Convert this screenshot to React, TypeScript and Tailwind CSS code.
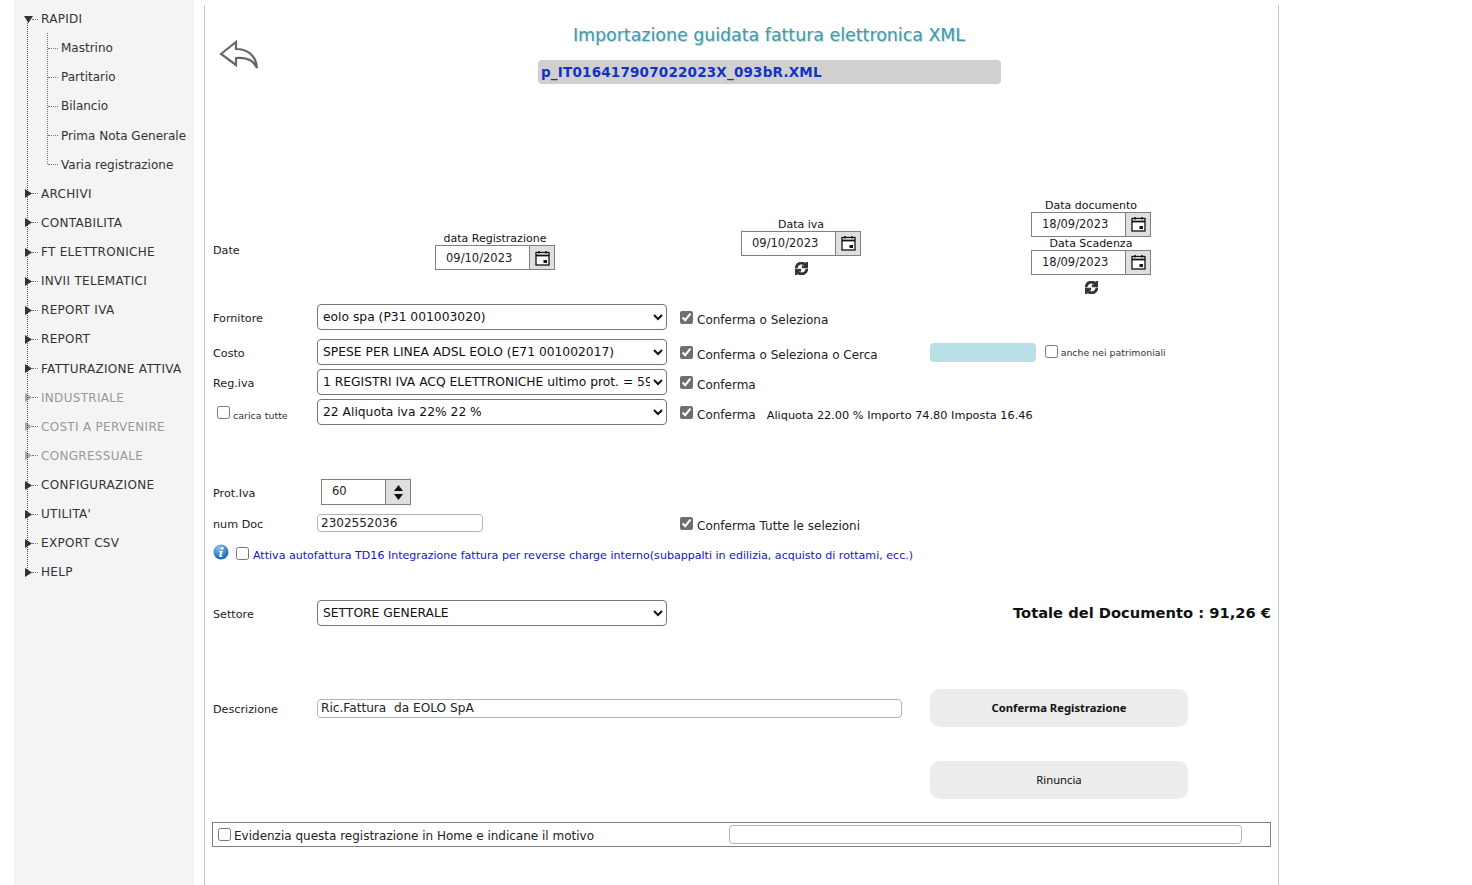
import { FaSync } from "react-icons/fa";

const VERDANA = "font-['DejaVu_Sans',Verdana,sans-serif]";

const menu: { label: string; disabled?: boolean; open?: boolean; children?: string[] }[] = [
  {
    label: "RAPIDI",
    open: true,
    children: ["Mastrino", "Partitario", "Bilancio", "Prima Nota Generale", "Varia registrazione"],
  },
  { label: "ARCHIVI" },
  { label: "CONTABILITA" },
  { label: "FT ELETTRONICHE" },
  { label: "INVII TELEMATICI" },
  { label: "REPORT IVA" },
  { label: "REPORT" },
  { label: "FATTURAZIONE ATTIVA" },
  { label: "INDUSTRIALE", disabled: true },
  { label: "COSTI A PERVENIRE", disabled: true },
  { label: "CONGRESSUALE", disabled: true },
  { label: "CONFIGURAZIONE" },
  { label: "UTILITA'" },
  { label: "EXPORT CSV" },
  { label: "HELP" },
];

function Arrow({ open, disabled }: { open?: boolean; disabled?: boolean }) {
  return (
    <svg
      width="9"
      height="9"
      viewBox="0 0 9 9"
      className={`absolute left-[10px] top-[10px] ${disabled ? "opacity-40" : ""}`}
    >
      {open ? <path d="M0 1h9L4.5 8z" fill="#333" /> : <path d="M1 0l7 4.5L1 9z" fill="#333" />}
    </svg>
  );
}

function Sidebar() {
  return (
    <aside className="relative h-[885px] w-[180px] shrink-0 bg-[#f4f4f4] pt-[4.5px] text-[12px] text-[#333]">
      {/* tree lines */}
      <div className="absolute left-[13px] top-[18px] h-[554px] border-l border-dotted border-[#555]" />
      <div className="absolute left-[33px] top-[33px] h-[131px] border-l border-dotted border-[#777]" />
      {menu.map((item) => (
        <div key={item.label}>
          <div
            className={`relative flex h-[29.14px] items-center pl-[27px] tracking-[0.3px] ${item.disabled ? "text-[#999]" : ""}`}
          >
            <Arrow open={item.open} disabled={item.disabled} />
            <span className="absolute left-[18px] top-[14px] w-[6px] border-t border-dotted border-[#777]" />
            {item.label}
          </div>
          {item.children?.map((child) => (
            <div key={child} className="relative flex h-[29.14px] items-center pl-[47px]">
              <span className="absolute left-[34px] top-[14px] w-[10px] border-t border-dotted border-[#777]" />
              {child}
            </div>
          ))}
        </div>
      ))}
    </aside>
  );
}

function CalendarIcon() {
  return (
    <svg width="15" height="16" viewBox="0 0 15 16" fill="none">
      <rect x="1" y="2.5" width="13" height="12.5" fill="#fff" stroke="#111" strokeWidth="1.3" />
      <path d="M1 5.5h13" stroke="#111" strokeWidth="1.8" />
      <path d="M4 1v2.5M11 1v2.5" stroke="#111" strokeWidth="1.5" />
      <rect x="8.5" y="10" width="3.5" height="3" fill="#111" />
    </svg>
  );
}

function DateField({ label, value }: { label: string; value: string }) {
  return (
    <div className="flex w-[120px] flex-col items-center">
      <div className="h-[13px] whitespace-nowrap text-[11px] leading-[13px] text-[#111]">{label}</div>
      <div className="flex h-[25px] w-[120px] border border-[#808080] bg-white">
        <input
          readOnly
          value={value}
          className="w-[94px] border-r border-[#808080] pl-[10px] pt-[2px] text-[11.5px] text-[#222] outline-none"
        />
        <div className="flex flex-1 items-center justify-center bg-[#dfdfdf]">
          <CalendarIcon />
        </div>
      </div>
    </div>
  );
}

function Refresh() {
  return (
    <FaSync
      className="mx-auto mt-[6px] h-[13px] w-[13px] text-[#333]"
      stroke="currentColor"
      strokeWidth={40}
    />
  );
}

function Check({ checked }: { checked?: boolean }) {
  return (
    <input
      type="checkbox"
      defaultChecked={checked}
      className="h-[13px] w-[13px] shrink-0 accent-[#6f6f6f]"
    />
  );
}

function Confirm({ label }: { label: string }) {
  return (
    <label className="flex items-center gap-[4px] text-[12px] text-[#222]">
      <Check checked />
      <span className="relative top-[2.5px] whitespace-nowrap">{label}</span>
    </label>
  );
}

function Select({ value }: { value: string }) {
  return (
    <select
      defaultValue={value}
      className="h-[26px] w-[350px] rounded-[4px] border border-[#767676] bg-white pl-[1px] text-[12.3px] text-[#111]"
    >
      <option>{value}</option>
    </select>
  );
}

function FieldLabel({ children, width = "w-[112px]" }: { children: React.ReactNode; width?: string }) {
  return (
    <div className={`${width} shrink-0 pl-[8px] text-[11.2px] text-[#222]`}>
      <span className="relative top-[2px]">{children}</span>
    </div>
  );
}

function FormRow({
  label,
  value,
  className = "",
  children,
}: {
  label: React.ReactNode;
  value: string;
  className?: string;
  children?: React.ReactNode;
}) {
  return (
    <div className={`flex h-[26px] items-center ${className}`}>
      {label}
      <Select value={value} />
      <div className="ml-[13px] flex items-center">{children}</div>
    </div>
  );
}

function InfoIcon() {
  return (
    <svg width="16" height="16" viewBox="0 0 16 16" className="relative top-[-1px]">
      <defs>
        <radialGradient id="info" cx="40%" cy="25%" r="80%">
          <stop offset="0" stopColor="#8cc4ee" />
          <stop offset="1" stopColor="#0f5ca8" />
        </radialGradient>
      </defs>
      <circle cx="8" cy="8" r="7.5" fill="url(#info)" />
      <circle cx="9.2" cy="4.3" r="1.4" fill="#fff" />
      <path d="M6.5 7h3.2L8.4 12h1.1v1H6l1.2-5H6.5z" fill="#fff" />
    </svg>
  );
}

function ActionButton({ label, bold }: { label: string; bold?: boolean }) {
  return (
    <button
      className={`h-[38px] w-[258px] rounded-[10px] bg-[#ececec] font-['Noto_Sans',sans-serif] text-[11.25px] text-[#111] ${bold ? "font-bold" : ""}`}
    >
      {label}
    </button>
  );
}

export default function App() {
  return (
    <div className={`flex h-[885px] overflow-hidden bg-white pl-[14px] ${VERDANA}`}>
      <Sidebar />

      <main className="ml-[10px] mt-[5px] h-[880px] w-[1075px] shrink-0 border-x border-[#c8c8c8]">
        {/* Header */}
        <div className="relative h-[195px]">
          <svg
            width="40"
            height="30"
            viewBox="0 0 40 30"
            fill="none"
            className="absolute left-[14px] top-[35px]"
          >
            <path
              d="M2 14L17 2v7c11 0 20 6 21 19-3-7-10-11-21-10v7z"
              stroke="#666"
              strokeWidth="2.2"
              strokeLinejoin="miter"
            />
          </svg>
          <h1 className="pl-[55px] pt-[18px] text-center text-[17.4px] leading-[24px] text-[#35a0b4] [text-shadow:1px_1px_1px_#ccc]">
            Importazione guidata fattura elettronica XML
          </h1>
          <div className="ml-[333px] mt-[13px] flex h-[24px] w-[463px] items-center rounded-[4px] bg-[#d0d0d0] pl-[3px] text-[13.5px] font-bold tracking-[0.2px] text-[#1433c4]">
            p_IT016417907022023X_093bR.XML
          </div>
        </div>

        {/* Date */}
        <div className="flex h-[100px] items-center">
          <div className="mt-[2px] w-[230px] shrink-0 pl-[8px] text-[11.2px] text-[#222]">Date</div>
          <div className="mt-[2px]">
            <DateField label="data Registrazione" value="09/10/2023" />
          </div>
          <div className="mb-[8px] ml-[186px]">
            <DateField label="Data iva" value="09/10/2023" />
            <Refresh />
          </div>
          <div className="mb-[8px] ml-[170px]">
            <DateField label="Data documento" value="18/09/2023" />
            <DateField label="Data Scadenza" value="18/09/2023" />
            <Refresh />
          </div>
        </div>

        {/* Selects */}
        <div className="mt-[4px] flex flex-col gap-[4px]">
          <FormRow label={<FieldLabel>Fornitore</FieldLabel>} value="eolo spa (P31 001003020)" className="mb-[5px]">
            <Confirm label="Conferma o Seleziona" />
          </FormRow>
          <FormRow label={<FieldLabel>Costo</FieldLabel>} value="SPESE PER LINEA ADSL EOLO (E71 001002017)">
            <Confirm label="Conferma o Seleziona o Cerca" />
            <div className="ml-[52px] h-[19px] w-[106px] rounded-[4px] bg-[#b8dfe6]" />
            <label className="ml-[9px] flex items-center gap-[3px] text-[9.4px] text-[#333]">
              <Check />
              <span className="relative top-[1px] whitespace-nowrap">anche nei patrimoniali</span>
            </label>
          </FormRow>
          <FormRow
            label={<FieldLabel>Reg.iva</FieldLabel>}
            value="1 REGISTRI IVA ACQ ELETTRONICHE ultimo prot. = 59 del 09/10/2023"
          >
            <Confirm label="Conferma" />
          </FormRow>
          <FormRow
            value="22 Aliquota iva 22% 22 %"
            label={
              <div className="flex w-[112px] shrink-0 items-center gap-[3px] pl-[12px] text-[9.5px] text-[#333]">
                <Check />
                <span className="relative top-[4px]">carica tutte</span>
              </div>
            }
          >
            <Confirm label="Conferma" />
            <span className="relative top-[4px] ml-[11px] whitespace-nowrap text-[11.3px] text-[#111]">
              Aliquota 22.00 % Importo 74.80 Imposta 16.46
            </span>
          </FormRow>
        </div>

        {/* Protocollo */}
        <div className="mt-[54px] flex h-[26px] items-center">
          <FieldLabel width="w-[116px]">Prot.Iva</FieldLabel>
          <div className="flex h-[26px] w-[90px] border border-[#808080] bg-white">
            <input
              readOnly
              value="60"
              className="w-[64px] border-r border-[#808080] pl-[10px] text-[11.5px] text-[#222] outline-none"
            />
            <div className="flex flex-1 flex-col items-center justify-center gap-[3px] bg-[#dfdfdf]">
              <svg width="9" height="6" viewBox="0 0 9 6">
                <path d="M4.5 0L9 6H0z" fill="#111" />
              </svg>
              <svg width="9" height="6" viewBox="0 0 9 6">
                <path d="M0 0h9L4.5 6z" fill="#111" />
              </svg>
            </div>
          </div>
        </div>

        <div className="mt-[9px] flex h-[18px] items-center">
          <FieldLabel>num Doc</FieldLabel>
          <input
            readOnly
            value="2302552036"
            className="h-[18px] w-[166px] rounded-[4px] border border-[#b4b4b4] pl-[3px] text-[12px] text-[#222] outline-none"
          />
          <div className="ml-[197px]">
            <Confirm label="Conferma Tutte le selezioni" />
          </div>
        </div>

        <div className="mt-[13px] flex h-[16px] items-center pl-[8px]">
          <InfoIcon />
          <span className="ml-[7px] flex items-center">
            <Check />
          </span>
          <span className="relative top-[3px] ml-[4px] whitespace-nowrap text-[11.07px] text-[#1414c8]">
            Attiva autofattura TD16 Integrazione fattura per reverse charge interno(subappalti in edilizia, acquisto di rottami, ecc.)
          </span>
        </div>

        {/* Settore */}
        <div className="mt-[39px] flex h-[26px] items-center">
          <FieldLabel>Settore</FieldLabel>
          <Select value="SETTORE GENERALE" />
          <div className="ml-auto mr-[7px] whitespace-nowrap text-[14.7px] font-bold text-[#111]">
            Totale del Documento : 91,26 €
          </div>
        </div>

        {/* Descrizione e pulsanti */}
        <div className="mt-[63px] flex">
          <div className="flex h-[38px] items-center">
            <FieldLabel>Descrizione</FieldLabel>
            <input
              readOnly
              value="Ric.Fattura  da EOLO SpA"
              className="h-[19px] w-[585px] rounded-[4px] border border-[#b4b4b4] pl-[3px] text-[12.15px] text-[#222] outline-none"
            />
          </div>
          <div className="ml-[28px] flex flex-col gap-[34px]">
            <ActionButton label="Conferma Registrazione" bold />
            <ActionButton label="Rinuncia" />
          </div>
        </div>

        {/* Evidenzia */}
        <div className="ml-[7px] mt-[23px] flex h-[25px] w-[1059px] items-center border border-[#808080] pl-[5px]">
          <Check />
          <span className="relative top-[1px] ml-[3px] w-[495px] shrink-0 whitespace-nowrap text-[12px] text-[#222]">
            Evidenzia questa registrazione in Home e indicane il motivo
          </span>
          <input className="h-[19px] w-[513px] rounded-[4px] border border-[#b4b4b4] outline-none" />
        </div>
      </main>
    </div>
  );
}
